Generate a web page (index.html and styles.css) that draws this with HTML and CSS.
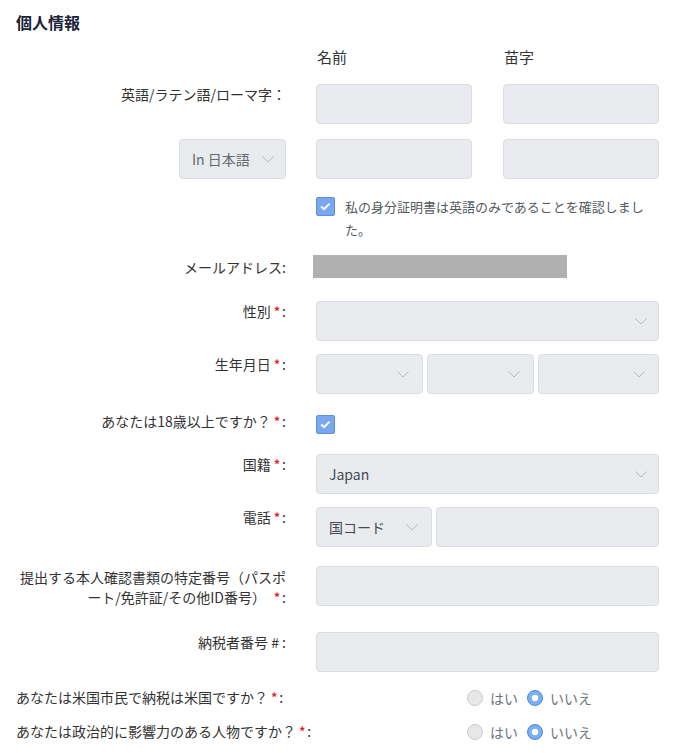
FILE: index.html
```html
<!DOCTYPE html>
<html lang="ja">
<head>
<meta charset="utf-8">
<title>個人情報</title>
<link rel="stylesheet" href="styles.css">
</head>
<body>
<div class="page">
  <h2 class="title">個人情報</h2>

  <div class="row m-head">
    <div class="label"></div>
    <div class="pair">
      <div class="colhead">名前</div>
      <div class="colhead">苗字</div>
    </div>
  </div>

  <div class="row m-r1">
    <div class="label">英語/ラテン語/ローマ字：</div>
    <div class="pair">
      <div class="field"></div>
      <div class="field"></div>
    </div>
  </div>

  <div class="row m-r2">
    <div class="label label-flex">
      <div class="field select lang"><span class="sel-text">In 日本語</span><svg class="chev" width="12" height="7" viewBox="0 0 12 7"><path d="M0.5 0.5 L6 6 L11.5 0.5" fill="none" stroke="#b3b9c6" stroke-width="1"/></svg></div>
    </div>
    <div class="pair">
      <div class="field"></div>
      <div class="field"></div>
    </div>
  </div>

  <div class="row m-check">
    <div class="label"></div>
    <div class="check-line">
      <span class="checkbox"><svg width="19" height="19" viewBox="0 0 19 19"><path d="M5.2 9.6 L8 12.2 L13.6 6.6" fill="none" stroke="#fff" stroke-width="2"/></svg></span>
      <span class="check-text">私の身分証明書は英語のみであることを確認しました。</span>
    </div>
  </div>

  <div class="row m-email">
    <div class="label label-email">メールアドレス:</div>
    <div class="email-box"></div>
  </div>

  <div class="row m-gender">
    <div class="label">性別 <span class="req">*</span>:</div>
    <div class="field select"><span class="sel-text"></span><svg class="chev" width="12" height="7" viewBox="0 0 12 7"><path d="M0.5 0.5 L6 6 L11.5 0.5" fill="none" stroke="#b3b9c6" stroke-width="1"/></svg></div>
  </div>

  <div class="row m-dob">
    <div class="label">生年月日 <span class="req">*</span>:</div>
    <div class="dob">
      <div class="field select"><span class="sel-text"></span><svg class="chev" width="12" height="7" viewBox="0 0 12 7"><path d="M0.5 0.5 L6 6 L11.5 0.5" fill="none" stroke="#b3b9c6" stroke-width="1"/></svg></div>
      <div class="field select"><span class="sel-text"></span><svg class="chev" width="12" height="7" viewBox="0 0 12 7"><path d="M0.5 0.5 L6 6 L11.5 0.5" fill="none" stroke="#b3b9c6" stroke-width="1"/></svg></div>
      <div class="field select"><span class="sel-text"></span><svg class="chev" width="12" height="7" viewBox="0 0 12 7"><path d="M0.5 0.5 L6 6 L11.5 0.5" fill="none" stroke="#b3b9c6" stroke-width="1"/></svg></div>
    </div>
  </div>

  <div class="row m-adult">
    <div class="label">あなたは18歳以上ですか？ <span class="req">*</span>:</div>
    <div class="adult-check">
      <span class="checkbox"><svg width="19" height="19" viewBox="0 0 19 19"><path d="M5.2 9.6 L8 12.2 L13.6 6.6" fill="none" stroke="#fff" stroke-width="2"/></svg></span>
    </div>
  </div>

  <div class="row m-nat">
    <div class="label">国籍 <span class="req">*</span>:</div>
    <div class="field select"><span class="sel-text dark">Japan</span><svg class="chev" width="12" height="7" viewBox="0 0 12 7"><path d="M0.5 0.5 L6 6 L11.5 0.5" fill="none" stroke="#b3b9c6" stroke-width="1"/></svg></div>
  </div>

  <div class="row m-phone">
    <div class="label">電話 <span class="req">*</span>:</div>
    <div class="phone">
      <div class="field select code"><span class="sel-text dark">国コード</span><svg class="chev" width="12" height="7" viewBox="0 0 12 7"><path d="M0.5 0.5 L6 6 L11.5 0.5" fill="none" stroke="#b3b9c6" stroke-width="1"/></svg></div>
      <div class="field"></div>
    </div>
  </div>

  <div class="row m-id">
    <div class="label label-id">提出する本人確認書類の特定番号（パスポート/免許証/その他ID番号）<span class="req req-gap">*</span>:</div>
    <div class="field"></div>
  </div>

  <div class="row m-tax">
    <div class="label">納税者番号 #&nbsp;:</div>
    <div class="field"></div>
  </div>

  <div class="radio-row m-rad1">
    <div class="radio-label">あなたは米国市民で納税は米国ですか？ <span class="req">*</span>:</div>
    <div class="opts">
      <label class="opt"><span class="radio"></span><span class="opt-text">はい</span></label>
      <label class="opt"><span class="radio on"></span><span class="opt-text">いいえ</span></label>
    </div>
  </div>

  <div class="radio-row m-rad2">
    <div class="radio-label">あなたは政治的に影響力のある人物ですか？ <span class="req">*</span>:</div>
    <div class="opts">
      <label class="opt"><span class="radio"></span><span class="opt-text">はい</span></label>
      <label class="opt"><span class="radio on"></span><span class="opt-text">いいえ</span></label>
    </div>
  </div>
</div>
</body>
</html>
```

FILE: styles.css
```css
* { box-sizing: border-box; }

body {
  margin: 0;
  background: #ffffff;
  font-family: "Noto Sans CJK JP", "Noto Sans", sans-serif;
  font-size: 14px;
  color: #333333;
}

.page {
  width: 678px;
  padding: 0 19px 0 16px;
}

.title {
  margin: 11px 0 0;
  font-size: 16px;
  line-height: 22px;
  font-weight: 700;
  color: #1b2237;
}

.row {
  display: grid;
  grid-template-columns: 270px 343px;
  column-gap: 30px;
  align-items: start;
}

.label {
  text-align: right;
  font-size: 14px;
  line-height: 20px;
  color: #333333;
}

.label-flex {
  display: flex;
  justify-content: flex-end;
}

.label-email { padding-top: 2px; }
.label-id { padding-top: 1px; }

.req {
  color: #e6201c;
  font-size: 12px;
  font-weight: 700;
  position: relative;
  top: -1px;
  margin-right: 2px;
}

.req-gap { margin-left: 8px; }

.pair {
  display: grid;
  grid-template-columns: 1fr 1fr;
  column-gap: 31px;
}

.colhead {
  font-size: 15px;
  line-height: 20px;
  color: #333333;
  padding-left: 1px;
}

.field {
  height: 40px;
  background: #e9ebee;
  border: 1px solid #dadde1;
  border-radius: 4px;
}

.select {
  display: flex;
  align-items: center;
  justify-content: space-between;
  padding: 0 11px 0 12px;
}

.sel-text {
  color: #666a70;
  font-size: 14px;
}

.sel-text.dark { color: #454a52; }

.chev { flex: none; }

.lang { width: 107px; }

.check-line {
  display: flex;
  align-items: flex-start;
  gap: 10px;
}

.checkbox {
  flex: none;
  width: 19px;
  height: 19px;
  margin-top: 2px;
  background: #7aa8ef;
  border: 1px solid #5d8fdf;
  border-radius: 2px;
  display: flex;
  align-items: center;
  justify-content: center;
}

.checkbox svg { display: block; margin: -1px; }

.check-text {
  width: 302px;
  font-size: 13px;
  line-height: 23px;
  color: #555a60;
}

.email-box {
  margin-left: -3px;
  width: 254px;
  height: 23px;
  background: #b0b0b0;
}

.dob {
  display: grid;
  grid-template-columns: 107px 107px 1fr;
  column-gap: 4px;
}

.dob .select { padding-right: 13px; }

.adult-check .checkbox { margin-top: 4px; }

.phone {
  display: grid;
  grid-template-columns: 116px 1fr;
  column-gap: 4px;
}

.code { padding-right: 13px; }

.radio-row {
  display: grid;
  grid-template-columns: 451px auto;
  align-items: center;
}

.radio-label {
  font-size: 14px;
  line-height: 20px;
  color: #333333;
}

.opts {
  display: flex;
  align-items: center;
  gap: 9px;
}

.opt {
  display: flex;
  align-items: center;
  gap: 7px;
}

.radio {
  width: 16px;
  height: 16px;
  border-radius: 50%;
  background: #e8e8e8;
  border: 1px solid #c9c9c9;
}

.radio.on {
  background: radial-gradient(circle, #ffffff 0 3px, #7cb0f3 3.6px);
  border: 1px solid #3f86e4;
}

.opt-text {
  font-size: 14px;
  line-height: 20px;
  color: #70757b;
}

.m-head { margin-top: 14px; }
.m-r1 { margin-top: 17px; }
.m-r2 { margin-top: 15px; }
.m-check { margin-top: 16px; }
.m-email { margin-top: 14px; }
.m-gender { margin-top: 23px; }
.m-dob { margin-top: 13px; }
.m-adult { margin-top: 17px; }
.m-nat { margin-top: 20px; }
.m-phone { margin-top: 13px; }
.m-id { margin-top: 19px; }
.m-tax { margin-top: 24px; }
.m-rad1 { margin-top: 15px; }
.m-rad2 { margin-top: 13px; }
```
